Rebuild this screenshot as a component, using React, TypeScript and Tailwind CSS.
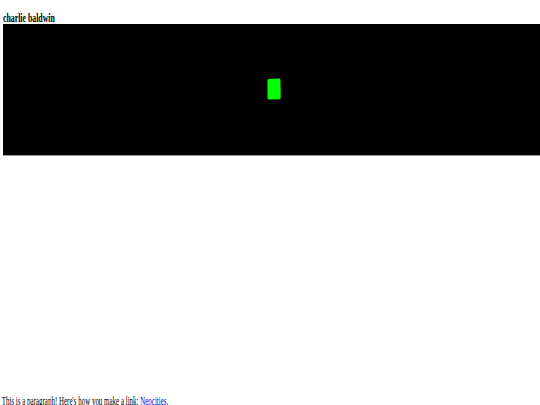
import React from 'react';

const App: React.FC = () => {
  return (
    <div className="w-[540px] h-[405px] overflow-hidden bg-white font-['Liberation_Serif',serif] text-black">
      <div className="pl-[3px] pt-[11px]">
        <h1 className="text-[13px] leading-[13px] font-bold origin-left scale-x-[0.6] whitespace-nowrap">charlie baldwin</h1>
      </div>
      <div className="ml-[3px] h-[132px] w-[560px] bg-black border-b border-[#999] flex items-start">
        <svg className="ml-[263px] mt-[54px]" width="16" height="23" viewBox="0 0 16 23">
          <path d="M1.5 2.2 Q1.5 1.2 3 1 L13 0.6 Q14.3 0.6 14.4 2 L14.8 19.5 Q14.8 21 13.4 21.2 L3 21.6 Q1.6 21.6 1.5 20.2 Z" fill="#00ff00" />
        </svg>
      </div>
      <div className="h-[239px]" />
      <p className="pl-[3px] text-[12px] leading-[12px] origin-left scale-x-[0.58] whitespace-nowrap">
        This is a paragraph! Here's how you make a link: <a className="text-[#0000ee]">Neocities</a>.
      </p>
    </div>
  );
};

export default App;
